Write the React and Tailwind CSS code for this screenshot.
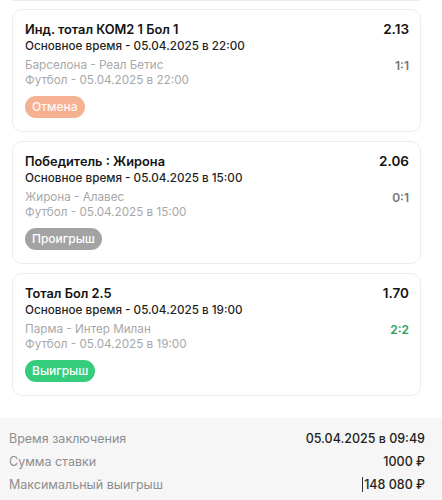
const bets = [
  {
    title: "Инд. тотал КОМ2 1 Бол 1",
    odds: "2.13",
    period: "Основное время - 05.04.2025 в 22:00",
    teams: "Барселона - Реал Бетис",
    score: "1:1",
    sport: "Футбол - 05.04.2025 в 22:00",
    status: "cancel",
  },
  {
    title: "Победитель : Жирона",
    odds: "2.06",
    period: "Основное время - 05.04.2025 в 15:00",
    teams: "Жирона - Алавес",
    score: "0:1",
    sport: "Футбол - 05.04.2025 в 15:00",
    status: "lose",
  },
  {
    title: "Тотал Бол 2.5",
    odds: "1.70",
    period: "Основное время - 05.04.2025 в 19:00",
    teams: "Парма - Интер Милан",
    score: "2:2",
    sport: "Футбол - 05.04.2025 в 19:00",
    status: "win",
  },
];

const badges = {
  cancel: { label: "Отмена", cls: "bg-[#f6b092] text-white/90" },
  lose: { label: "Проигрыш", cls: "bg-[#a3a3a3] text-white" },
  win: { label: "Выигрыш", cls: "bg-[#35cc7c] text-white" },
};

const BetCard = ({ bet }) => {
  const badge = badges[bet.status];
  return (
    <div className="ml-3 mr-[21px] rounded-[10px] border border-[#ededed] bg-white pl-[12px] pr-[11px] pt-[11px] pb-[13px]">
      <div className="flex items-center justify-between leading-[17px]">
        <div className="text-[12.8px] font-semibold text-[#141414]">{bet.title}</div>
        <div className="text-[13.5px] font-semibold text-[#141414]">{bet.odds}</div>
      </div>
      <div className="text-[11.7px] font-medium leading-[16px] text-[#1f1f1f]">{bet.period}</div>
      <div className="mt-[4px] flex items-center justify-between leading-[15px]">
        <div className="text-[11.7px] text-[#a8a8a8]">{bet.teams}</div>
        <div
          className={
            bet.status === "win"
              ? "text-[12px] font-semibold text-[#2a9d5c]"
              : "text-[12px] font-semibold text-[#777777]"
          }
        >
          {bet.score}
        </div>
      </div>
      <div className="text-[11.7px] leading-[15px] text-[#a8a8a8]">{bet.sport}</div>
      <div className="mt-[8px] flex">
        <span className={`rounded-full px-[7px] text-[12px] font-medium leading-[22px] ${badge.cls}`}>
          {badge.label}
        </span>
      </div>
    </div>
  );
};

const Row = ({ label, value, caret }) => (
  <div className="flex items-center justify-between leading-[23px]">
    <span className="text-[12.5px] text-[#8e8e8e]">{label}</span>
    <span className="flex items-center text-[12.5px] font-medium text-[#1f1f1f]">
      {caret && <span className="mr-[1px] h-[15px] w-[1px] bg-[#333]" />}
      {value}
    </span>
  </div>
);

export default function App() {
  return (
    <div
      className="h-[500px] w-[442px] overflow-hidden bg-white"
      style={{ fontFamily: "Inter, 'Noto Sans', sans-serif" }}
    >
      {/* bottom edge of the card above */}
      <div className="ml-3 mr-[21px] h-[1px] rounded-b-[10px] border-b border-[#ededed]" />
      <div className="mt-[8px] flex flex-col gap-[9px]">
        {bets.map((bet, i) => (
          <BetCard key={i} bet={bet} />
        ))}
      </div>
      <div className="mt-[22px] bg-[#f6f6f6] pt-[9px] pb-[6px] pl-[9px] pr-[17px]">
        <Row label="Время заключения" value="05.04.2025 в 09:49" />
        <Row label="Сумма ставки" value="1000 ₽" />
        <Row label="Максимальный выигрыш" value="148 080 ₽" caret />
      </div>
    </div>
  );
}
